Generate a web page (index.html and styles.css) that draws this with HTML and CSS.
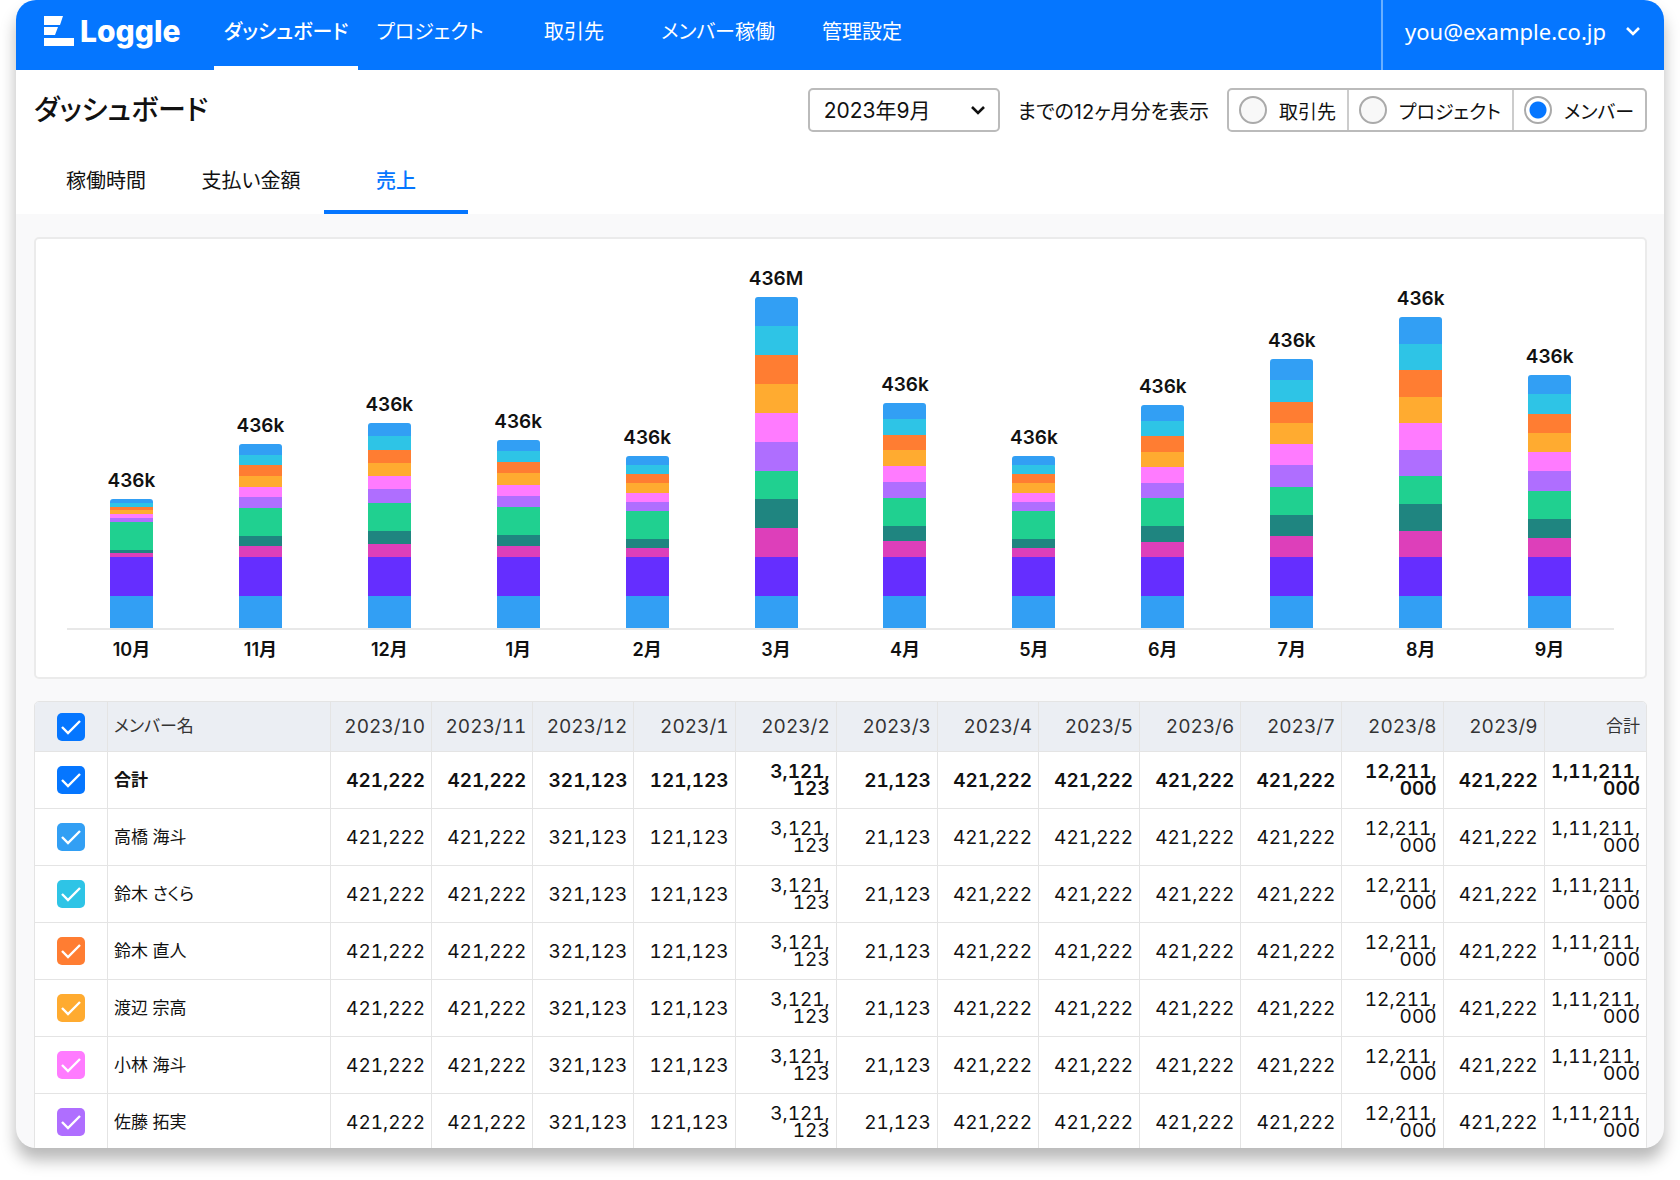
FILE: index.html
```html
<!DOCTYPE html>
<html lang="ja">
<head>
    <meta charset="UTF-8">
    <meta name="viewport" content="width=device-width, initial-scale=1.0">
    <title>ダッシュボード | Loggle</title>
    <link rel="stylesheet" href="styles.css">
</head>
<body>

<div class="window">
    <header class="header">
        <a class="logo" href="#">
            <svg class="logo-mark" viewBox="0 0 30 30" aria-hidden="true">
                <path d="M0 0H19L16 9H0ZM0 11H14L11 19H0ZM0 22H30V30H0Z" fill="#fff"/>
            </svg>
            Loggle
        </a>
        <nav class="nav">
            <a class="active" href="#">ダッシュボード</a>
            <a href="#">プロジェクト</a>
            <a href="#">取引先</a>
            <a href="#">メンバー稼働</a>
            <a href="#">管理設定</a>
        </nav>
        <button class="account" type="button">
            you@example.co.jp
            <svg class="chevron" viewBox="0 0 14 10" aria-hidden="true">
                <path d="M1 2L7 8L13 2" fill="none" stroke="#fff" stroke-width="2.6"/>
            </svg>
        </button>
    </header>

    <div class="panel">
        <div class="toolbar">
            <h1>ダッシュボード</h1>
            <div class="filters">
                <select id="month">
                    <option>2023年9月</option>
                </select>
                <label for="month">までの12ヶ月分を表示</label>
                <div class="radio-group">
                    <label><input type="radio" name="group">取引先</label>
                    <label><input type="radio" name="group">プロジェクト</label>
                    <label><input type="radio" name="group" checked>メンバー</label>
                </div>
            </div>
        </div>
        <nav class="tabs">
            <a href="#">稼働時間</a>
            <a href="#">支払い金額</a>
            <a class="active" href="#">売上</a>
        </nav>
    </div>

    <main class="content">
        <section class="card">
            <div class="chart" id="chart"></div>
            <div class="months" id="months"></div>
        </section>

        <table class="table">
            <colgroup>
                <col class="col-check">
                <col class="col-name">
                <col span="13">
            </colgroup>
            <thead>
                <tr>
                    <th><input type="checkbox" aria-label="すべて選択" checked></th>
                    <th class="name">メンバー名</th>
                    <th>2023/10</th>
                    <th>2023/11</th>
                    <th>2023/12</th>
                    <th>2023/1</th>
                    <th>2023/2</th>
                    <th>2023/3</th>
                    <th>2023/4</th>
                    <th>2023/5</th>
                    <th>2023/6</th>
                    <th>2023/7</th>
                    <th>2023/8</th>
                    <th>2023/9</th>
                    <th class="sum">合計</th>
                </tr>
            </thead>
            <tbody id="rows"></tbody>
        </table>
    </main>
</div>

<script src="script.js"></script>
</body>
</html>
```
FILE: styles.css
```css
* {
    box-sizing: border-box;
}

body {
    margin: 0;
    height: 100vh;
    overflow: hidden;
    background: #fff;
    color: #111;
    font-family: Inter, "Noto Sans CJK JP", sans-serif;
    font-size: 20px;
    font-feature-settings: "palt";
}

a {
    color: inherit;
    text-decoration: none;
}

button, select, input {
    font: inherit;
    font-feature-settings: inherit;
    color: inherit;
    margin: 0;
}

.window {
    height: calc(100vh - 32px);
    margin: 0 16px;
    overflow: hidden;
    border-radius: 20px;
    background: #f9f9fa;
    box-shadow: 0 12px 16px rgba(0, 0, 0, 0.28);
}

/* Header */
.header {
    display: flex;
    height: 70px;
    background: #0576ff;
    color: #fff;
}

.logo {
    display: flex;
    align-items: center;
    gap: 6px;
    width: 198px;
    padding: 0 0 8px 28px;
    font-size: 30px;
    font-weight: 800;
}

.logo-mark {
    width: 30px;
    height: 30px;
}

.nav {
    display: flex;
    flex: 1;
}

.nav a {
    display: flex;
    justify-content: center;
    width: 144px;
    padding-top: 17px;
    border-bottom: 4px solid transparent;
    line-height: 30px;
    white-space: nowrap;
}

.nav .active {
    border-color: #fff;
    font-weight: 500;
}

.account {
    display: flex;
    align-items: center;
    gap: 20px;
    padding: 0 24px 8px 22px;
    border: 0;
    border-left: 2px solid #69afff;
    background: none;
    font-family: "Noto Sans", sans-serif;
    font-size: 22px;
    cursor: pointer;
}

.chevron {
    width: 14px;
    height: 10px;
}

/* Title, filters and tabs */
.panel {
    padding: 18px 17px 0 18px;
    background: #fff;
}

.toolbar {
    display: flex;
    align-items: center;
    justify-content: space-between;
}

h1 {
    margin: 0;
    font-size: 28px;
    font-weight: 500;
    line-height: 44px;
}

.filters {
    display: flex;
    align-items: center;
    gap: 18px;
}

select {
    width: 192px;
    height: 44px;
    padding: 0 14px;
    border: 2px solid #bbb;
    border-radius: 5px;
    appearance: none;
    background: #fff url("data:image/svg+xml,%3Csvg xmlns='http://www.w3.org/2000/svg' width='14' height='10'%3E%3Cpath d='M1 2L7 8L13 2' fill='none' stroke='%23111' stroke-width='2.6'/%3E%3C/svg%3E") no-repeat right 13px center;
    font-size: 21px;
}

.radio-group {
    display: flex;
    height: 44px;
    border: 2px solid #bbb;
    border-radius: 5px;
    font-size: 19px;
}

.radio-group label {
    display: flex;
    align-items: center;
    gap: 12px;
    padding: 0 11px 0 10px;
    cursor: pointer;
}

.radio-group label + label {
    border-left: 2px solid #ccc;
}

.radio-group input {
    width: 28px;
    height: 28px;
    border: 2px solid #aaa;
    border-radius: 50%;
    appearance: none;
    background: #f8f8f8;
}

.radio-group input:checked {
    background: radial-gradient(circle, #0576ff 8px, #fff 9px);
}

.tabs {
    display: flex;
    gap: 1px;
    margin-top: 14px;
}

.tabs a {
    width: 144px;
    height: 68px;
    padding-top: 20px;
    border-bottom: 4px solid transparent;
    line-height: 30px;
    text-align: center;
}

.tabs .active {
    border-color: #0576ff;
    color: #0576ff;
    font-weight: 500;
}

.content {
    padding: 23px 17px 0 18px;
}

/* Chart */
.card {
    margin-bottom: 22px;
    padding: 24px 31px 14px;
    border: 2px solid #ebebeb;
    border-radius: 5px;
    background: #fff;
}

.chart {
    display: flex;
    align-items: flex-end;
    height: 367px;
    border-bottom: 2px solid #e8e8e8;
}

.column {
    flex: 1;
    display: flex;
    flex-direction: column;
    align-items: center;
    gap: 7px;
    font-size: 19px;
    font-weight: 600;
    line-height: 22px;
}

.bar {
    display: flex;
    flex-direction: column;
    width: 43px;
    overflow: hidden;
    border-radius: 3px 3px 0 0;
}

.segment {
    flex: 1;
}

.segment.green {
    flex: none;
    height: 28px;
}

.segment.violet {
    flex: none;
    height: 39px;
}

.segment.base {
    flex: none;
    height: 32px;
}

.months {
    display: flex;
    padding-top: 7px;
    font-size: 18px;
    font-weight: 600;
    line-height: 26px;
}

.months span {
    flex: 1;
    text-align: center;
}

/* Colours shared by the bars and the row check boxes */
.primary { background-color: #0576ff; }
.blue, .base { background-color: #329ff4; }
.cyan { background-color: #2ec4e6; }
.orange { background-color: #ff7d32; }
.amber { background-color: #ffab30; }
.pink { background-color: #ff7bff; }
.purple { background-color: #af6eff; }
.green { background-color: #20d090; }
.teal { background-color: #1f8580; }
.magenta { background-color: #dd3fba; }
.violet { background-color: #652eff; }

/* Table */
.table {
    width: 100%;
    table-layout: fixed;
    border: 1px solid #e4e4e4;
    border-spacing: 0;
    border-radius: 5px;
    background: #fff;
    overflow: hidden;
}

.col-check {
    width: 73px;
}

.col-name {
    width: 223px;
}

th, td {
    height: 57px;
    padding: 0 6px;
    border-right: 1px solid #e4e4e4;
    border-bottom: 1px solid #e4e4e4;
    font-size: 19px;
    font-weight: 400;
    font-variant-numeric: tabular-nums;
    line-height: 17px;
    text-align: right;
}

th {
    height: 50px;
    background: #ebeef3;
    color: #333;
}

th:first-child, td:first-child {
    text-align: center;
}

th:last-child, td:last-child {
    border-right: 0;
}

.table .name {
    font-size: 17px;
    text-align: left;
}

.table .sum {
    font-size: 17px;
}

.total td {
    font-weight: 600;
}

.table input {
    display: block;
    width: 28px;
    height: 28px;
    margin: 0 auto;
    border-radius: 5px;
    appearance: none;
}

.table th input {
    background-color: #0576ff;
}

.table input:checked {
    background-image: url("data:image/svg+xml,%3Csvg xmlns='http://www.w3.org/2000/svg' width='28' height='28'%3E%3Cpath d='M5 14L11 20L23 8' fill='none' stroke='%23fff' stroke-width='2.4'/%3E%3C/svg%3E");
}
```
FILE: script.js
```js
const months = [
    { name: "10月", label: "436k", height: 129 },
    { name: "11月", label: "436k", height: 184 },
    { name: "12月", label: "436k", height: 205 },
    { name: "1月", label: "436k", height: 188 },
    { name: "2月", label: "436k", height: 172 },
    { name: "3月", label: "436M", height: 331 },
    { name: "4月", label: "436k", height: 225 },
    { name: "5月", label: "436k", height: 172 },
    { name: "6月", label: "436k", height: 223 },
    { name: "7月", label: "436k", height: 269 },
    { name: "8月", label: "436k", height: 311 },
    { name: "9月", label: "436k", height: 253 }
];

// Top to bottom
const segments = ["blue", "cyan", "orange", "amber", "pink", "purple", "green", "teal", "magenta", "violet", "base"];

const members = [
    { name: "合計", color: "primary", total: true },
    { name: "高橋 海斗", color: "blue" },
    { name: "鈴木 さくら", color: "cyan" },
    { name: "鈴木 直人", color: "orange" },
    { name: "渡辺 宗高", color: "amber" },
    { name: "小林 海斗", color: "pink" },
    { name: "佐藤 拓実", color: "purple" }
];

const amounts = [
    "421,222", "421,222", "321,123", "121,123", "3,121,<br>123", "21,123", "421,222",
    "421,222", "421,222", "421,222", "12,211,<br>000", "421,222", "1,11,211,<br>000"
];

document.getElementById("chart").innerHTML = months.map(month => `
    <div class="column">
        <span>${month.label}</span>
        <div class="bar" style="height: ${month.height}px">
            ${segments.map(color => `<div class="segment ${color}"></div>`).join("")}
        </div>
    </div>`).join("");

document.getElementById("months").innerHTML = months.map(month => `<span>${month.name}</span>`).join("");

document.getElementById("rows").innerHTML = members.map((member, i) => `
    <tr class="${member.total ? "total" : ""}">
        <td><input type="checkbox" id="member${i}" class="${member.color}" checked></td>
        <td class="name"><label for="member${i}">${member.name}</label></td>
        ${amounts.map(amount => `<td>${amount}</td>`).join("")}
    </tr>`).join("");
```
